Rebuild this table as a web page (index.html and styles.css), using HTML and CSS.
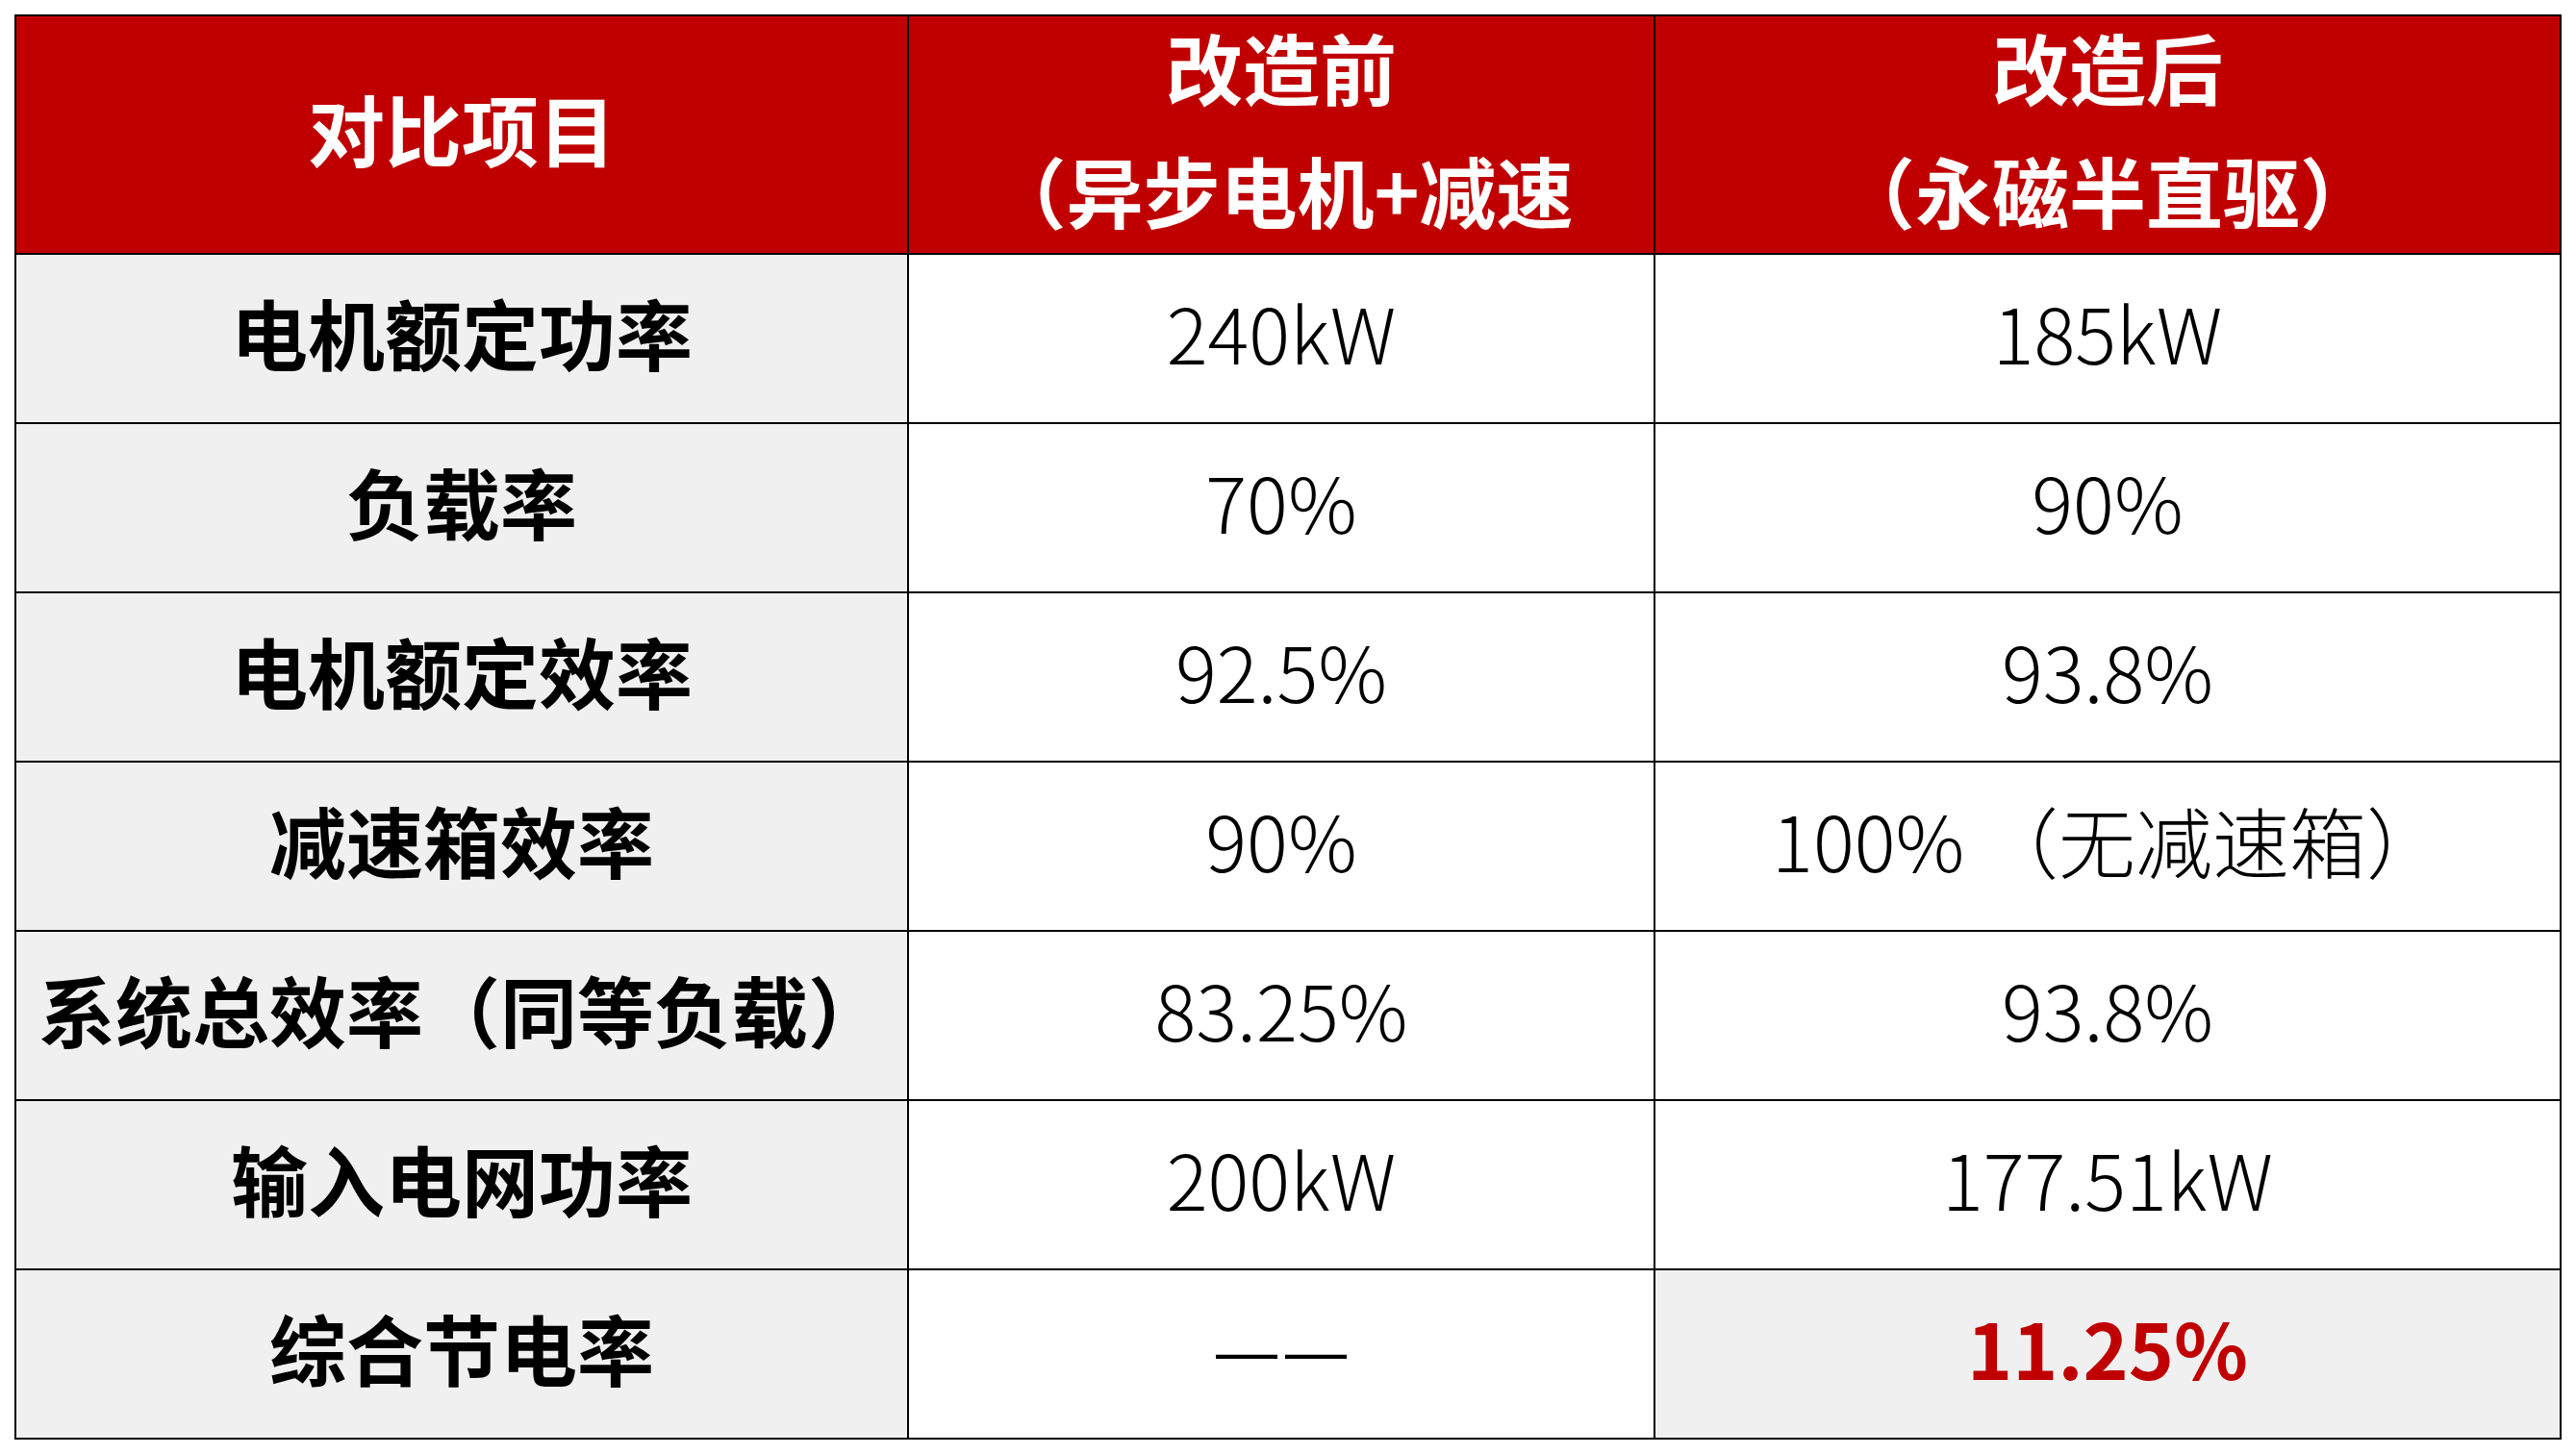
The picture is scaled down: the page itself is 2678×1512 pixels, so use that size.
FILE: index.html
```html
<!DOCTYPE html>
<html lang="zh-CN">
<head>
<meta charset="utf-8">
<title>改造前后对比</title>
<link rel="stylesheet" href="styles.css">
</head>
<body>
<div class="page">
  <div class="sheet" role="table">
    <div class="cell head" role="columnheader">对比项目</div>
    <div class="cell head" role="columnheader"><span class="hl">改造前</span><span class="hl">（异步电机+减速</span></div>
    <div class="cell head" role="columnheader"><span class="hl">改造后</span><span class="hl">（永磁半直驱）</span></div>

    <div class="cell label">电机额定功率</div>
    <div class="cell value">240kW</div>
    <div class="cell value">185kW</div>

    <div class="cell label">负载率</div>
    <div class="cell value">70%</div>
    <div class="cell value">90%</div>

    <div class="cell label">电机额定效率</div>
    <div class="cell value">92.5%</div>
    <div class="cell value">93.8%</div>

    <div class="cell label">减速箱效率</div>
    <div class="cell value">90%</div>
    <div class="cell value">100% （无减速箱）</div>

    <div class="cell label">系统总效率（同等负载）</div>
    <div class="cell value">83.25%</div>
    <div class="cell value">93.8%</div>

    <div class="cell label">输入电网功率</div>
    <div class="cell value">200kW</div>
    <div class="cell value">177.51kW</div>

    <div class="cell label">综合节电率</div>
    <div class="cell value"><span class="dash">——</span></div>
    <div class="cell value highlight">11.25%</div>
  </div>
</div>
</body>
</html>
```

FILE: styles.css
```css
html, body {
  margin: 0;
  padding: 0;
  background: #ffffff;
}

.page {
  padding: 15px;
}

.sheet {
  display: grid;
  grid-template-columns: 928px 776px 942px;
  grid-template-rows: 248px repeat(7, 176px);
  width: 2646px;
  border-left: 2px solid #000000;
  border-top: 2px solid #000000;
  font-family: "Noto Sans CJK SC", "Noto Sans", sans-serif;
  font-size: 80px;
  color: #000000;
}

.cell {
  box-sizing: border-box;
  border-right: 2px solid #000000;
  border-bottom: 2px solid #000000;
  display: flex;
  flex-direction: column;
  align-items: center;
  justify-content: center;
  text-align: center;
  white-space: nowrap;
  line-height: 1;
  padding-bottom: 16px;
}

.head {
  background: #c00000;
  color: #ffffff;
  font-weight: 700;
}

.hl {
  display: block;
  line-height: 128px;
}

.label {
  background: #f0f0f0;
  font-weight: 700;
}

.value {
  background: #ffffff;
  font-weight: 300;
}

.dash {
  display: block;
  font-family: "Liberation Sans", sans-serif;
  font-size: 64px;
  letter-spacing: 8px;
  padding-left: 8px;
  padding-top: 10px;
}

.value.highlight {
  background: #f0f0f0;
  color: #c00000;
  font-weight: 700;
}
```
